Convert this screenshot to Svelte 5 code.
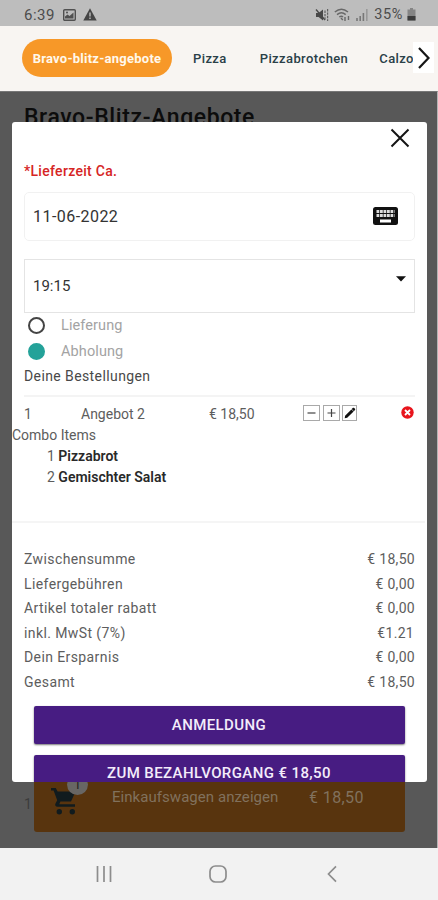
<script>
  const tabs = ['Bravo-blitz-angebote', 'Pizza', 'Pizzabrotchen', 'Calzone']
  const comboItems = [
    { count: 1, name: 'Pizzabrot' },
    { count: 2, name: 'Gemischter Salat' },
  ]
  const totals = [
    { label: 'Zwischensumme', value: '€ 18,50' },
    { label: 'Liefergebühren', value: '€ 0,00' },
    { label: 'Artikel totaler rabatt', value: '€ 0,00' },
    { label: 'inkl. MwSt (7%)', value: '€1.21', inset: true },
    { label: 'Dein Ersparnis', value: '€ 0,00' },
    { label: 'Gesamt', value: '€ 18,50' },
  ]

  let active = $state(0)
  let delivery = $state('Abholung')
</script>

<div class="phone">
  <header class="status">
    <span class="clock">6:39</span>
    <svg class="picture" width="13" height="12" viewBox="0 0 13 12">
      <rect x="0.7" y="0.7" width="11.6" height="10.6" rx="1" fill="none" stroke="#505050" stroke-width="1.4" />
      <path d="M2 9.5V7.5l2.5-2 2 1.5 4-3.5v6z" fill="#505050" />
      <circle cx="4" cy="3.5" r="1" fill="#505050" />
    </svg>
    <svg class="warning" width="14" height="13" viewBox="0 0 14 13">
      <path d="M7 0.3 13.7 12.5H0.3z" fill="#454545" />
      <path d="M7 4.4v4M7 9.6v1.4" stroke="#bdbdbd" stroke-width="1.4" />
    </svg>
    <span class="spacer"></span>
    <svg class="mute" width="14" height="14" viewBox="0 0 14 14">
      <path d="M1 5h2.6L8 1.5v11L3.6 9H1z" fill="#484848" />
      <path d="M1 1.5 10 12" stroke="#484848" stroke-width="1.3" />
      <path d="M10 2.5v9M12.6 1v12" stroke="#606060" stroke-width="1.2" stroke-dasharray="2.4 1" />
    </svg>
    <svg class="wifi" width="17" height="14" viewBox="0 0 17 14" fill="none" stroke="#686868" stroke-width="1.4">
      <path d="M0.8 4Q7.5 -1.6 14 4M3 6.6Q7.5 3 11.7 6.6M5.3 9Q7.5 7.5 9 9" />
      <path d="M7 10l1.8 2M11 13V9M14.5 8v4" />
    </svg>
    <svg class="signal" width="12" height="12" viewBox="0 0 12 12" stroke-width="1.6">
      <path d="M1 9v3M4.2 7v5M7.4 4v8" stroke="#777" />
      <path d="M10.8 0v12" stroke="#999" />
    </svg>
    <span class="battery-text">35%</span>
    <svg width="9" height="13" viewBox="0 0 9 13">
      <path d="M3 0h3v1.5h2.5V12.5h-8V1.5H3z" fill="#858585" />
      <path d="M0.5 8h8v4.5h-8z" fill="#3c3c3c" />
    </svg>
  </header>

  <nav class="tabs">
    {#each tabs as tab, i}
      <button class="tab" class:active={active === i} onclick={() => active = i}>{tab}</button>
    {/each}
    <button class="next" aria-label="Weiter">
      <svg width="14" height="24" viewBox="0 0 14 24"><path d="M2 2l9.5 10L2 22" fill="none" stroke="#161616" stroke-width="2.2" /></svg>
    </button>
  </nav>

  <main class="page">
    <h1>Bravo-Blitz-Angebote</h1>
    <span class="page-count">1</span>

    <div class="cart">
      <span class="cart-icon">
        <svg width="26" height="28" viewBox="0 0 26 28" fill="#111b1e">
          <path d="M0 1h4.8l1.8 3.6H24.5L20 14.5H9.4l-1.2 2.7H24v2.6H6.5c-1.9 0-2.9-1.8-2-3.4l1.7-3.2L2.6 3.6H0z" />
          <circle cx="8.3" cy="24.8" r="2.7" />
          <circle cx="21.3" cy="24.8" r="2.7" />
        </svg>
        <span class="badge">1</span>
      </span>
      <span class="cart-label">Einkaufswagen anzeigen</span>
      <span class="cart-price">€ 18,50</span>
    </div>

    <section class="modal">
      <button class="close" aria-label="Schließen">
        <svg width="20" height="20" viewBox="0 0 20 20"><path d="M1.5 1.5l17 17M18.5 1.5l-17 17" stroke="#141414" stroke-width="2" /></svg>
      </button>
      <p class="lead">*Lieferzeit Ca.</p>

      <div class="field date">
        <span>11-06-2022</span>
        <svg width="25" height="18" viewBox="0 0 25 18">
          <rect width="25" height="18" rx="2.5" fill="#111" />
          <path d="M3.5 4.5h18M3.5 8.5h18" stroke="#ddd" stroke-width="3.2" stroke-dasharray="2.8 0.7" />
          <path d="M7 14h11" stroke="#fff" stroke-width="3" />
        </svg>
      </div>

      <div class="field time">
        <span>19:15</span>
        <svg width="10" height="6" viewBox="0 0 10 6"><path d="M0 0.3h10L5 5.5z" fill="#111" /></svg>
      </div>

      <div class="options">
        {#each ['Lieferung', 'Abholung'] as option}
          <button class="option" onclick={() => delivery = option}>
            <span class="dot" class:checked={delivery === option}></span>{option}
          </button>
        {/each}
      </div>

      <h2>Deine Bestellungen</h2>

      <div class="order">
        <span class="qty">1</span>
        <span class="name">Angebot 2</span>
        <span class="price">€ 18,50</span>
        <span class="actions">
          <button aria-label="Weniger"><svg width="15" height="14" viewBox="0 0 15 14"><path d="M3.5 7h8" stroke="#444" stroke-width="1.2" /></svg></button>
          <button aria-label="Mehr"><svg width="15" height="14" viewBox="0 0 15 14"><path d="M3.5 7h8M7.5 3v8" stroke="#444" stroke-width="1.2" /></svg></button>
          <button aria-label="Bearbeiten"><svg width="13" height="14" viewBox="0 0 13 14"><path d="M1.7 12.2l.4-2.5L8.4 3.4l2.2 2.2L4.2 11.8zM8.7 3.1l1.3-1.3q.6-.4 1.2.2l.8.8q.5.6 0 1.2l-1.2 1.2z" fill="#111" /></svg></button>
        </span>
        <button class="remove" aria-label="Entfernen">
          <svg width="13" height="13" viewBox="0 0 13 13">
            <circle cx="6.5" cy="6.5" r="6.2" fill="#e8141c" />
            <path d="M4 4l5 5M9 4l-5 5" stroke="#fff" stroke-width="1.8" />
          </svg>
        </button>
      </div>

      <div class="combo">
        <p>Combo Items</p>
        <ul>
          {#each comboItems as item}
            <li><span>{item.count}</span> <b>{item.name}</b></li>
          {/each}
        </ul>
      </div>

      <dl class="totals">
        {#each totals as row}
          <div>
            <dt>{row.label}</dt>
            <dd class:inset={row.inset}>{row.value}</dd>
          </div>
        {/each}
      </dl>

      <button class="primary">ANMELDUNG</button>
      <button class="primary checkout">ZUM BEZAHLVORGANG € 18,50</button>
    </section>
  </main>

  <footer class="system-nav">
    <svg width="16" height="16" viewBox="0 0 16 16"><path d="M1.5 0v16M8 0v16M14.5 0v16" stroke="#8d8d8d" stroke-width="1.7" /></svg>
    <svg class="home" width="18" height="18" viewBox="0 0 18 18"><rect x="1" y="1" width="16" height="16" rx="5.5" fill="none" stroke="#8d8d8d" stroke-width="1.7" /></svg>
    <svg width="10" height="18" viewBox="0 0 10 18"><path d="M9 1.3L1.5 9 9 16.7" fill="none" stroke="#8d8d8d" stroke-width="1.7" /></svg>
  </footer>
</div>

<style>
  :global(body) {
    margin: 0;
    font-family: Roboto, "Liberation Sans", sans-serif;
  }

  button {
    font: inherit;
    color: inherit;
    letter-spacing: inherit;
    background: none;
    border: 0;
    padding: 0;
  }

  svg { display: block; flex: none; }
  p, h1, h2, ul, dl, dd { margin: 0; padding: 0; }

  .phone {
    display: flex;
    flex-direction: column;
    width: 438px;
    height: 900px;
    overflow: hidden;
  }

  .status {
    display: flex;
    align-items: center;
    height: 26px;
    box-sizing: border-box;
    padding: 3px 22px 0 24px;
    background: #bdbdbd;
    color: #4c4c4c;
    font-size: 15px;
  }
  .clock { letter-spacing: 0.5px; }
  .picture { margin-left: 8px; }
  .warning { margin-left: 7px; }
  .spacer { flex: 1; }
  .mute { margin-right: 5px; }
  .wifi { margin-right: 5px; }
  .signal { margin-right: 6px; }
  .battery-text { margin-right: 4px; letter-spacing: 0.6px; font-size: 14.5px; }

  .tabs {
    position: relative;
    display: flex;
    align-items: center;
    height: 65px;
    box-sizing: border-box;
    padding: 0 0 1px 22px;
    background: #f8f5f2;
    overflow: hidden;
  }
  .tab {
    flex: none;
    margin-right: 33px;
    font-size: 13px;
    font-weight: 500;
    letter-spacing: 0.4px;
    color: #2a4048;
  }
  .tab:nth-child(3) { margin-right: 31px; }
  .tab.active {
    height: 38px;
    width: 150px;
    margin-right: 21px;
    border-radius: 19px;
    background: #f79828;
    color: #fff8ec;
    font-weight: 700;
    letter-spacing: 0.25px;
  }
  .next {
    position: absolute;
    right: 4px;
    top: 16px;
    width: 21px;
    height: 31px;
    background: #fff;
    display: grid;
    place-items: center;
  }

  .page {
    position: relative;
    flex: 1;
    background: #585858;
    border-right: 1px solid #b5b5b5;
    border-top: 1px solid #777;
    box-sizing: border-box;
  }
  h1 {
    padding: 12px 0 0 24px;
    font-size: 23px;
    line-height: 27px;
    font-weight: 500;
    letter-spacing: 0.6px;
    color: #0c0c0c;
  }
  .page-count {
    position: absolute;
    left: 24px;
    top: 704px;
    font-size: 14px;
    color: #3c3c3c;
  }

  .cart {
    position: absolute;
    left: 34px;
    top: 664px;
    width: 371px;
    height: 76px;
    box-sizing: border-box;
    padding: 24px 0 0 17px;
    display: flex;
    align-items: flex-start;
    border-radius: 3px;
    background: #58340e;
    color: #81715d;
    font-size: 15px;
    letter-spacing: 0.05px;
  }
  .cart-icon {
    position: relative;
    width: 61px;
    padding-top: 7px;
    box-sizing: border-box;
  }
  .badge {
    position: absolute;
    left: 16px;
    top: -6px;
    width: 21px;
    height: 21px;
    line-height: 21px;
    border-radius: 50%;
    background: #686664;
    color: #222;
    font-size: 13px;
    text-align: center;
  }
  .cart-label { width: 197px; line-height: 36px; margin-top: -1px; }
  .cart-price { font-size: 16px; line-height: 36px; letter-spacing: 0.4px; }

  .modal {
    position: absolute;
    left: 12px;
    top: 30px;
    width: 415px;
    height: 660px;
    overflow: hidden;
    border-radius: 3px;
    background: #fff;
    box-sizing: border-box;
    padding: 0 12px;
    color: #5d5d5d;
    font-size: 14px;
    letter-spacing: 0.3px;
  }
  .close {
    display: block;
    margin: 6px 5px 0 auto;
  }
  .lead {
    margin-top: 13px;
    line-height: 20px;
    font-size: 14px;
    font-weight: 500;
    color: #d62525;
  }

  .field {
    display: flex;
    justify-content: space-between;
    box-sizing: border-box;
    border: 1px solid #f1f1f1;
    color: #333;
    width: 391px;
  }
  .date {
    height: 49px;
    margin-top: 11px;
    padding: 0 16px 1px 8px;
    align-items: center;
    border-radius: 5px;
    font-size: 16px;
    letter-spacing: 0.45px;
  }
  .time {
    height: 54px;
    margin-top: 18px;
    padding: 16px 8px 0 8px;
    border-color: #e4e4e4;
    font-size: 15px;
    letter-spacing: 0;
    line-height: 20px;
  }

  .options { margin-top: -1px; padding: 0 0 1px 4px; }
  .option {
    display: flex;
    align-items: center;
    height: 26px;
    color: #a3a3a3;
    font-size: 14.5px;
    letter-spacing: 0.1px;
  }
  .dot {
    width: 17px;
    height: 17px;
    box-sizing: border-box;
    margin-right: 16px;
    border: 2px solid #444;
    border-radius: 50%;
  }
  .dot.checked { border-color: #24a299; background: #24a299; }

  h2 {
    height: 32px;
    line-height: 23px;
    box-sizing: border-box;
    font-size: 14px;
    font-weight: 400;
    color: #484848;
    letter-spacing: 0.4px;
    border-bottom: 2px solid #f4f4f4;
  }

  .order {
    display: grid;
    grid-template-columns: 57px 128px 94px 1fr auto;
    align-items: center;
    height: 23px;
    padding-top: 5px;
    font-size: 14px;
    letter-spacing: 0;
  }
  .actions {
    display: flex;
    gap: 3px;
    margin-top: -2px;
  }
  .actions button { border: 1px solid #a9a9a9; }
  .actions button + button { margin-left: -0.5px; }
  .remove { margin: -3px 1px 0 0; }

  .combo {
    height: 98px;
    margin: 0 -10px 0 -12px;
    border-bottom: 2px solid #f5f5f5;
    box-sizing: border-box;
    line-height: 21px;
    letter-spacing: 0;
  }
  .combo ul { list-style: none; padding-left: 35px; }
  .combo b { font-weight: 600; color: #292929; }

  .totals { padding: 24px 0 12px; }
  .totals div {
    display: flex;
    justify-content: space-between;
    height: 24.5px;
    line-height: 24.5px;
  }
  .totals dt { letter-spacing: 0.4px; }
  .totals dd { letter-spacing: 0.3px; }
  .totals .inset { margin-right: 1px; }

  .primary {
    display: block;
    width: 371px;
    height: 38px;
    margin: 0 0 11px 9.5px;
    border-radius: 2px;
    background: #471c82;
    color: #f3ecfa;
    font-size: 15px;
    font-weight: 500;
    letter-spacing: 0.4px;
    box-shadow: 0 1px 2px #777;
  }
  /* the dialog ends just below this label */
  .checkout {
    height: 27px;
    margin-bottom: 0;
    padding-top: 10px;
    line-height: 17px;
    border-radius: 2px 2px 0 0;
  }

  .system-nav {
    display: flex;
    align-items: center;
    height: 52px;
    box-sizing: border-box;
    padding: 0 101px 1px 96px;
    justify-content: space-between;
    background: #f2f2f2;
  }
  .home { margin-right: 4px; }
</style>
